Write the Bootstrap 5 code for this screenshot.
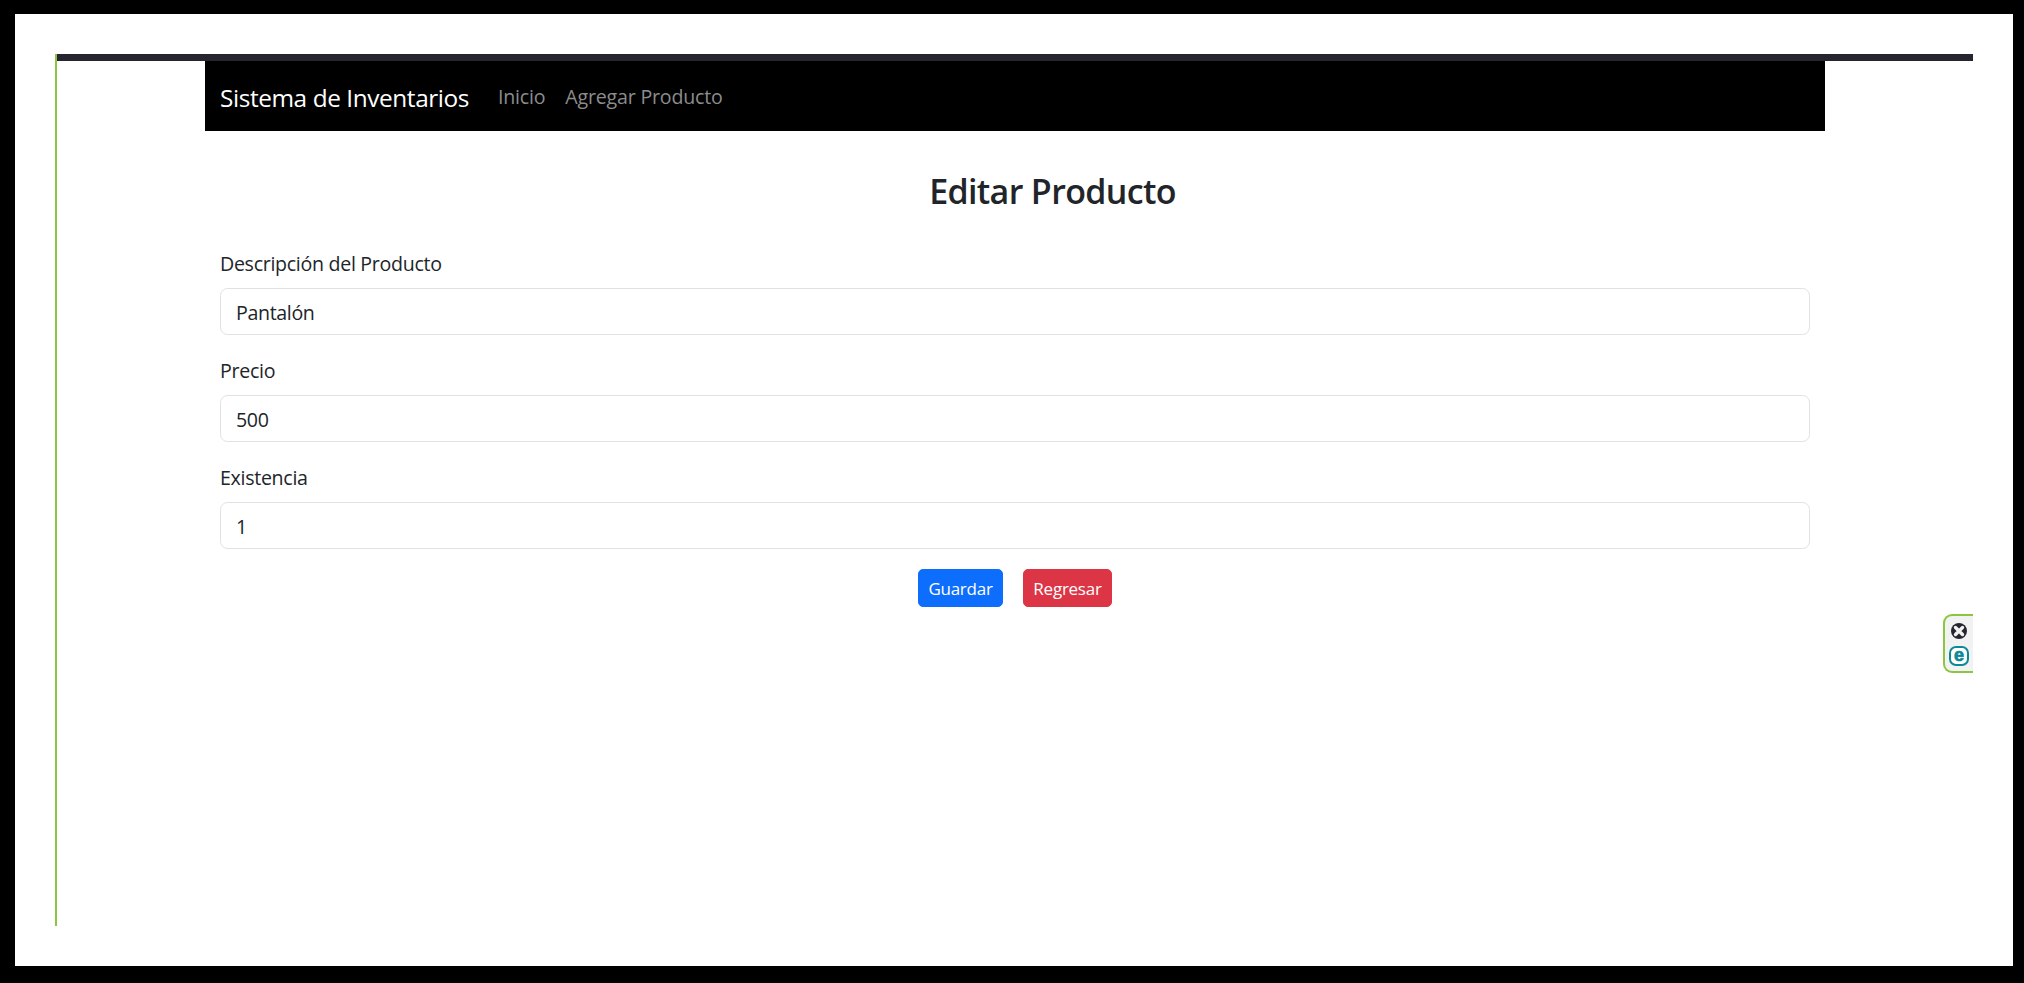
<!DOCTYPE html>
<html lang="es">
<head>
<meta charset="utf-8">
<meta name="viewport" content="width=device-width, initial-scale=1">
<title>Editar Producto</title>
<link href="https://cdn.jsdelivr.net/npm/bootstrap@5.3.0/dist/css/bootstrap.min.css" rel="stylesheet">
<style>
html { font-size: 20px; }
body { font-family: "Open Sans", "Noto Sans", sans-serif; height: 983px; border: solid #000; border-width: 14px 11px 17px 15px; padding: 40px; overflow: hidden; }
.sheet { border-left: 2px solid #8cc640; }
.topbar { height: 7px; background: #27252f; }
.wrap { width: 1620px; margin-left: 148px; }
.navbar { height: 70px; }
.navbar-brand { font-size: 24.4px; line-height: 37.5px; letter-spacing: -.42px; padding: 8px 0 5px; width: 248px; white-space: nowrap; }
.navbar-dark .nav-link { font-size: 19.6px; line-height: 30px; letter-spacing: -.2px; padding-top: 11px; padding-bottom: 9px; color: #8c8c8c; }
.page-title { font-size: 34px; font-weight: 600; line-height: 42px; letter-spacing: -.65px; margin: 39px 0 36px; padding-left: 75px; }
.form-label { font-size: 19.6px; line-height: 30px; letter-spacing: -.3px; display: block; padding-top: 1px; margin-bottom: 9px; }
.form-control { font-size: 19.6px; line-height: 30px; letter-spacing: -.35px; height: 47px; padding-top: 8.5px; padding-bottom: 6.5px; }
.btn-sm { font-size: 17px; line-height: 26px; letter-spacing: -.25px; height: 38px; padding: 6px 0 4px; }
.btn-save { width: 85px; }
.btn-back { width: 89px; }
.side-tab { position: absolute; right: 0; top: 560px; width: 30px; height: 59px; background: #f2f2f2; border: 2px solid #8cc640; border-right: 0; border-radius: 9px 0 0 9px; }
.side-tab svg { display: block; }
.side-tab text { font-family: "Liberation Sans", sans-serif; font-weight: bold; }
</style>
</head>
<body>
<div class="sheet h-100 position-relative">
  <div class="topbar"></div>
  <div class="wrap">
    <nav class="navbar navbar-expand navbar-dark bg-black">
      <div class="container-fluid">
        <a class="navbar-brand" href="#">Sistema de Inventarios</a>
        <div class="navbar-nav me-auto">
          <a class="nav-link" href="#">Inicio</a>
          <a class="nav-link" href="#">Agregar Producto</a>
        </div>
      </div>
    </nav>
    <form class="container-fluid">
      <h3 class="page-title text-center">Editar Producto</h3>
      <div class="mb-3">
        <label class="form-label" for="descripcion">Descripción del Producto</label>
        <input class="form-control" id="descripcion" type="text" value="Pantalón">
      </div>
      <div class="mb-3">
        <label class="form-label" for="precio">Precio</label>
        <input class="form-control" id="precio" type="text" value="500">
      </div>
      <div class="mb-3">
        <label class="form-label" for="existencia">Existencia</label>
        <input class="form-control" id="existencia" type="text" value="1">
      </div>
      <div class="d-flex justify-content-center gap-3">
        <button type="button" class="btn btn-primary btn-sm btn-save">Guardar</button>
        <a class="btn btn-danger btn-sm btn-back" href="#">Regresar</a>
      </div>
    </form>
  </div>
  <div class="side-tab">
    <svg width="28" height="55" viewBox="0 0 28 55">
      <circle cx="14" cy="15" r="8" fill="#27252f"/>
      <path d="M10.5 11.5l7 7M17.5 11.5l-7 7" stroke="#f2f2f2" stroke-width="3.4" stroke-linecap="round"/>
      <rect x="5" y="31" width="18" height="18" rx="6" fill="#fff" stroke="#0b8a96" stroke-width="2"/>
      <text x="14" y="45" font-size="18" text-anchor="middle" fill="#0b8a96" stroke="#0b8a96" stroke-width=".7">e</text>
    </svg>
  </div>
</div>
<script src="https://cdn.jsdelivr.net/npm/bootstrap@5.3.0/dist/js/bootstrap.bundle.min.js"></script>
</body>
</html>
